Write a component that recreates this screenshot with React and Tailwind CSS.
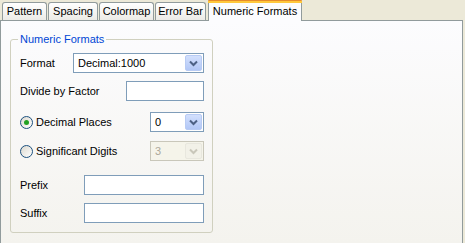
import React from "react";

function Chevron({ color = "#4D6185" }) {
  return (
    <svg width="9" height="7" viewBox="0 0 9 7">
      <path d="M1 1.5 L4.5 5 L8 1.5" fill="none" stroke={color} strokeWidth="2" />
    </svg>
  );
}

function Combo({ value, width, disabled }) {
  return (
    <div
      className={
        "flex items-stretch h-[20px] border p-px " +
        (disabled ? "border-[#C9C7BA] bg-[#F5F4EA]" : "border-[#7F9DB9] bg-white")
      }
      style={{ width }}
    >
      <div className={"flex-1 flex items-center pl-[3px] " + (disabled ? "text-[#ACA899]" : "text-black")}>
        {value}
      </div>
      {disabled ? (
        <div className="w-[17px] flex items-center justify-center rounded-[2px] bg-[#F2F1E8] border border-[#E8E7DE]">
          <Chevron color="#C9C7BA" />
        </div>
      ) : (
        <div className="w-[17px] flex items-center justify-center rounded-[2px] bg-linear-to-b from-[#D3E0FD] to-[#B2C7F6] border border-[#B8CBF4]">
          <Chevron />
        </div>
      )}
    </div>
  );
}

function TextBox({ width }) {
  return <div className="h-[20px] border border-[#7F9DB9] bg-white" style={{ width }} />;
}

function Radio({ checked, label }) {
  return (
    <div className="flex items-center gap-[3px]">
      <div className="w-[13px] h-[13px] rounded-full border border-[#1C5180] bg-linear-to-br from-[#DCD9CF] to-white flex items-center justify-center">
        {checked && <div className="w-[5px] h-[5px] rounded-full bg-[#21A121]" />}
      </div>
      <span>{label}</span>
    </div>
  );
}

function Tab({ label, width }) {
  return (
    <div
      className="h-[18px] flex items-center justify-center border border-b-0 border-[#919B9C] rounded-t-[3px] bg-linear-to-b from-white to-[#ECEBE6]"
      style={{ width }}
    >
      {label}
    </div>
  );
}

export default function App() {
  return (
    <div
      className="w-[465px] h-[243px] bg-[#ECE9D8] overflow-hidden text-[11px] text-black flex flex-col"
      style={{ fontFamily: '"Liberation Sans", Arial, sans-serif' }}
    >
      <div className="h-[20px] flex items-end pl-[2px] gap-px">
        <Tab label="Pattern" width={45} />
        <Tab label="Spacing" width={50} />
        <Tab label="Colormap" width={55} />
        <Tab label="Error Bar" width={51} />
        <div className="relative z-10 -mb-px ml-px h-[21px] w-[94px] flex flex-col border-x border-[#919B9C] bg-[#FCFCFE] rounded-t-[3px]">
          <div className="h-[1px] bg-[#E68B2C] rounded-t-[2px] -mx-px" />
          <div className="h-[2px] bg-[#FFC83C] -mx-px" />
          <div className="flex-1 flex items-center justify-center pb-[2px]">Numeric Formats</div>
        </div>
      </div>
      <div className="w-[463px] flex-1 border-l border-t border-r border-[#919B9C] bg-linear-to-b from-[#FCFCFE] to-[#F4F3EE] pl-[9px] pt-[18px]">
        <div className="relative w-[203px] h-[194px] border border-[#D0D0BF] rounded-[3px] pl-[9px] pr-[8px] pt-[13px] flex flex-col">
          <div className="absolute left-[7px] -top-[8px] px-[2px] bg-[#FBFBFC] text-[#0046D5] leading-[14px]">
            Numeric Formats
          </div>
          <div className="h-[20px] flex items-center justify-between">
            <span>Format</span>
            <Combo value="Decimal:1000" width={131} />
          </div>
          <div className="h-[20px] mt-[8px] flex items-center justify-between">
            <span>Divide by Factor</span>
            <TextBox width={78} />
          </div>
          <div className="h-[20px] mt-[11px] flex items-center justify-between">
            <Radio checked label="Decimal Places" />
            <Combo value="0" width={54} />
          </div>
          <div className="h-[20px] mt-[9px] flex items-center justify-between">
            <Radio label="Significant Digits" />
            <Combo value="3" width={54} disabled />
          </div>
          <div className="h-[20px] mt-[14px] flex items-center justify-between">
            <span>Prefix</span>
            <TextBox width={120} />
          </div>
          <div className="h-[20px] mt-[8px] flex items-center justify-between">
            <span>Suffix</span>
            <TextBox width={120} />
          </div>
        </div>
      </div>
    </div>
  );
}
